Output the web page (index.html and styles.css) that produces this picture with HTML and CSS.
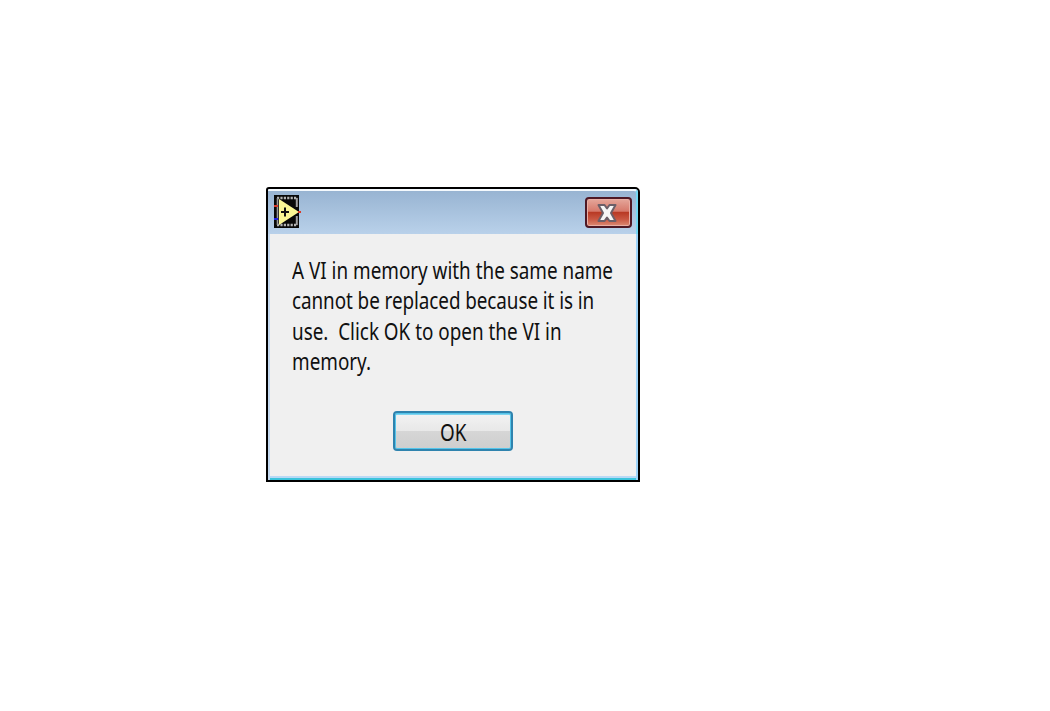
FILE: index.html
```html
<!DOCTYPE html>
<html lang="en">
<head>
    <meta charset="UTF-8">
    <title>LabVIEW</title>
    <link rel="stylesheet" href="styles.css">
</head>
<body>
    <div class="dialog">
        <div class="titlebar">
            <svg class="app-icon" width="28" height="33" viewBox="0 0 28 33">
                <rect x="0" y="0" width="25" height="33" fill="#080808"/>
                <path d="M3 3H23.5M3 30H23.5" stroke="#b4b4b4" stroke-width="2.4" stroke-dasharray="2.2 1.2"/>
                <path d="M22.8 3V12M22.8 21V30" stroke="#a0a0a0" stroke-width="2"/>
                <path d="M3.5 3V30" stroke="#989898" stroke-width="1.6"/>
                <path d="M5 4L25 17L5 30Z" fill="#fbf794"/>
                <path d="M7 17H15M11 12.5V21.5" stroke="#111" stroke-width="2"/>
                <path d="M0 11H4M24 17H27" stroke="#d83a2a" stroke-width="2"/>
                <path d="M0 24H4" stroke="#2020e0" stroke-width="2"/>
            </svg>
            <button class="close" aria-label="Close">
                <svg width="22" height="20" viewBox="0 0 22 20">
                    <path d="M2.5 2H8.5L11 5.5L13.5 2H19.5L15 10L19.5 18H13.5L11 14.5L8.5 18H2.5L7 10Z" fill="#f6f6f6" stroke="#6c5f68" stroke-width="2" stroke-linejoin="round"/>
                </svg>
            </button>
        </div>
        <div class="content">
            <p class="message">A VI in memory with the same name<br><span class="tight">cannot be replaced because it is in</span><br>use.&nbsp; Click OK to open the VI in<br>memory.</p>
            <button class="ok"><span>OK</span></button>
        </div>
    </div>
</body>
</html>
```

FILE: styles.css
```css
body {
    margin: 0;
    background-color: #fff;
    font-family: "Noto Sans", "Open Sans", sans-serif;
    color: #111;
}

.dialog {
    box-sizing: border-box;
    width: 374px;
    height: 295px;
    margin: 187px 0 0 266px;
    border: 2px solid #000;
    border-radius: 3px 5px 0 0;
    background-color: #f0f0f0;
    box-shadow: inset 2px 0 #c3d8ef, inset -2px 0 #9dd4fa, inset 0 -2px #3cc4dc, inset 0 -4px #b9d9f5;
}

.titlebar {
    box-sizing: border-box;
    display: flex;
    justify-content: space-between;
    align-items: flex-start;
    height: 45px;
    padding: 5px 4px 0 6px;
    border-top: 2px solid #f4f9fd;
    border-right: 2px solid #74d8f4;
    border-radius: 2px 4px 0 0;
    background: linear-gradient(#98b4d2, #b9d1ea);
}

.app-icon {
    display: block;
    margin-top: -1px;
}

.close {
    box-sizing: border-box;
    display: flex;
    justify-content: center;
    align-items: center;
    width: 47px;
    height: 31px;
    margin-top: 1px;
    padding: 0 3px 0 0;
    border: 2px solid #4e1824;
    border-radius: 4px;
    background: linear-gradient(#e5a79b, #d6796b 45%, #b93a25 50%, #c95742 75%, #dc8b74);
    box-shadow: inset 0 0 0 1px #e9aea4;
}

.content {
    display: flex;
    flex-direction: column;
    padding: 20.5px 0 0 23.7px;
}

.message {
    width: 400px;
    margin: 0;
    font-size: 23px;
    line-height: 30.6px;
    white-space: nowrap;
    transform: scaleX(0.82);
    transform-origin: 0 0;
}

.tight {
    letter-spacing: -0.08px;
}

.ok {
    box-sizing: border-box;
    width: 120px;
    height: 40px;
    margin: 34.1px 0 0 101.3px;
    padding: 2px 0 0;
    border: 2px solid #2f83ae;
    border-radius: 4px;
    background: linear-gradient(#f3f3f3, #e8e8e8 49%, #d6d6d6 51%, #cecece);
    box-shadow: inset 0 0 0 1px #55c5ea, inset 0 2px #7fd3ee;
    font-family: inherit;
    font-size: 23px;
    line-height: 34px;
    color: #111;
}

.ok span {
    display: inline-block;
    transform: scaleX(0.82);
}
```
